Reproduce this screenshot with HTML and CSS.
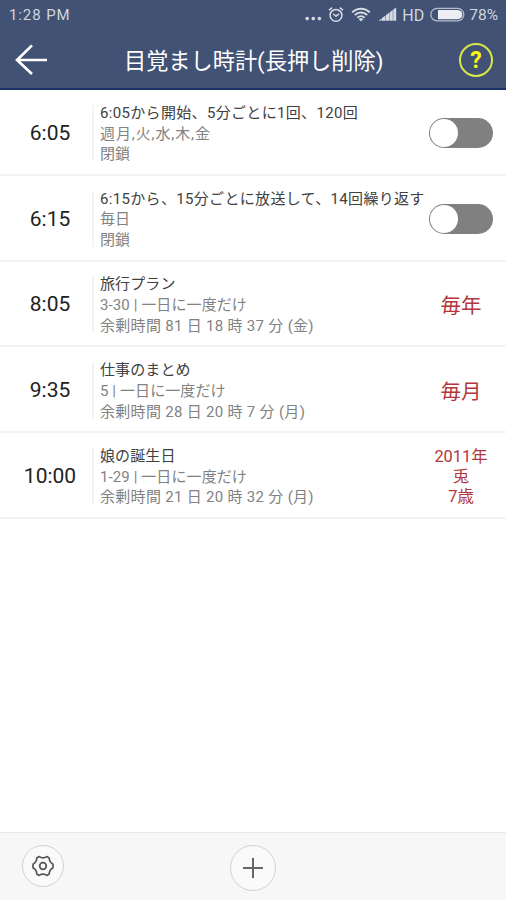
FILE: index.html
```html
<!DOCTYPE html>
<html lang="ja">
<head>
    <meta charset="UTF-8">
    <meta name="viewport" content="width=device-width, initial-scale=1.0">
    <title>目覚まし時計</title>
    <link rel="stylesheet" href="styles.css">
</head>
<body>

<div class="app">
    <header class="header">
        <div class="status-bar">
            <span class="clock">1:28 PM</span>
            <div class="status-icons">
                <svg class="dots" width="17" height="18" viewBox="0 0 17 18" fill="#d5dae3">
                    <circle cx="2.2" cy="12.6" r="1.8"/>
                    <circle cx="8.3" cy="12.6" r="1.8"/>
                    <circle cx="14.4" cy="12.6" r="1.8"/>
                </svg>
                <svg class="alarm" width="16" height="18" viewBox="0 0 16 18" fill="none" stroke="#d5dae3" stroke-width="1.5">
                    <circle cx="8" cy="9.3" r="5.9"/>
                    <path d="M1 4.2L4.2 1.7M15 4.2L11.8 1.7M5.2 7.8L8 10.2L11 7.8"/>
                </svg>
                <svg class="wifi" width="20" height="18" viewBox="0 0 20 18" fill="none" stroke="#d5dae3" stroke-width="2">
                    <path d="M1.2 6.4C6.3 1.4 13.7 1.4 18.8 6.4M3.8 9.1C7.5 5.6 12.5 5.6 16.2 9.1M6.4 11.7C8.5 9.7 11.5 9.7 13.6 11.7"/>
                    <path d="M10 15.6L7.6 12.9Q10 11.1 12.4 12.9Z" fill="#d5dae3" stroke="none"/>
                </svg>
                <svg class="signal" width="19" height="18" viewBox="0 0 19 18" fill="#d5dae3">
                    <path d="M0.5 14.8L3.6 12.4V14.8ZM4 12L7.6 9.4V14.8H4ZM8 9.1L11.4 6.5V14.8H8ZM11.8 6.2L14.8 3.9V14.8H11.8ZM15.2 3.5L18.2 1.4V14.8H15.2Z"/>
                </svg>
                <span class="hd">HD</span>
                <svg class="battery" width="35" height="18" viewBox="0 0 35 18">
                    <rect x="0.8" y="2.3" width="33" height="12.6" rx="6.3" fill="none" stroke="#b5bdcb" stroke-width="1.3"/>
                    <path d="M8 4H27.5Q32.3 4.3 32.3 8.6Q32.3 13 27.5 13.2H8Z" fill="#eceef1"/>
                </svg>
                <span class="percent">78%</span>
            </div>
        </div>
        <div class="title-bar">
            <svg class="back" width="34" height="34" viewBox="0 0 34 34" fill="none" stroke="#fff" stroke-width="2.7">
                <path d="M32 17H2M17 2.4L2 17L17 31"/>
            </svg>
            <h1>目覚まし時計(長押し削除)</h1>
            <div class="help">?</div>
        </div>
    </header>

    <main class="alarm-list">
        <div class="alarm-row">
            <div class="time">6:05</div>
            <div class="info">
                <p class="name long">6:05から開始、5分ごとに1回、120回</p>
                <p class="days">週月,火,水,木,金</p>
                <p>閉鎖</p>
            </div>
            <div class="action"><div class="switch"></div></div>
        </div>
        <div class="alarm-row">
            <div class="time">6:15</div>
            <div class="info">
                <p class="name long">6:15から、15分ごとに放送して、14回繰り返す</p>
                <p>毎日</p>
                <p>閉鎖</p>
            </div>
            <div class="action"><div class="switch"></div></div>
        </div>
        <div class="alarm-row">
            <div class="time">8:05</div>
            <div class="info">
                <p class="name">旅行プラン</p>
                <p>3-30 | 一日に一度だけ</p>
                <p class="remain">余剰時間 81 日 18 時 37 分 (金)</p>
            </div>
            <div class="action repeat">毎年</div>
        </div>
        <div class="alarm-row">
            <div class="time">9:35</div>
            <div class="info">
                <p class="name">仕事のまとめ</p>
                <p>5 | 一日に一度だけ</p>
                <p class="remain">余剰時間 28 日 20 時 7 分 (月)</p>
            </div>
            <div class="action repeat">毎月</div>
        </div>
        <div class="alarm-row">
            <div class="time">10:00</div>
            <div class="info">
                <p class="name">娘の誕生日</p>
                <p>1-29 | 一日に一度だけ</p>
                <p class="remain">余剰時間 21 日 20 時 32 分 (月)</p>
            </div>
            <div class="action birthday">2011年<br>兎<br>7歳</div>
        </div>
    </main>

    <footer class="footer">
        <div class="round-btn settings">
            <svg width="24" height="24" viewBox="0 0 24 24" fill="none" stroke="#555" stroke-width="1.7" stroke-linejoin="round">
                <path d="M8.2 2.6Q12 5 15.8 2.6L18.2 4Q18.3 8.1 22 10.2V13.8Q18.3 15.9 18.2 20L15.8 21.4Q12 19 8.2 21.4L5.8 20Q5.7 15.9 2 13.8V10.2Q5.7 8.1 5.8 4Z"/>
                <circle cx="12" cy="12" r="3.3"/>
            </svg>
        </div>
        <div class="round-btn add">
            <svg width="22" height="22" viewBox="0 0 22 22" stroke="#666" stroke-width="2">
                <path d="M11 1V21M1 11H21"/>
            </svg>
        </div>
    </footer>
</div>

</body>
</html>
```
FILE: styles.css
```css
* {
    box-sizing: border-box;
}
body {
    font-family: Roboto, "Noto Sans CJK JP", sans-serif;
    background-color: #fff;
    margin: 0;
}
.app {
    display: flex;
    flex-direction: column;
    height: 900px;
}
.header {
    height: 90px;
    background-color: #415274;
    border-bottom: 2px solid #1c3268;
    color: #fff;
}
.status-bar {
    display: flex;
    justify-content: space-between;
    align-items: center;
    height: 30px;
    padding: 0 8px 0 9px;
    color: #d0d5df;
    font-size: 15px;
}
.clock {
    letter-spacing: 0.9px;
}
.status-icons {
    display: flex;
    align-items: center;
}
.alarm {
    margin-left: 6px;
}
.wifi {
    margin-left: 7px;
}
.signal {
    margin-left: 7px;
}
.hd {
    margin-left: 5px;
    font-size: 16px;
}
.battery {
    margin-left: 6px;
}
.percent {
    margin-left: 4px;
    font-size: 15.5px;
}
.title-bar {
    display: flex;
    align-items: center;
    height: 60px;
    padding: 0 13px 0 15px;
}
h1 {
    margin: 2px 0 0 75px;
    font-size: 22.2px;
    font-weight: 400;
    line-height: 30px;
    white-space: nowrap;
}
.help {
    width: 34px;
    height: 34px;
    margin-left: auto;
    border: 2px solid #dbe64a;
    border-radius: 50%;
    color: #f7fa12;
    font-size: 23px;
    font-weight: 700;
    line-height: 31px;
    text-align: center;
}
.alarm-list {
    flex: 1;
}
.alarm-row {
    display: flex;
    align-items: center;
    height: 85.8px;
    padding-top: 2px;
    border-bottom: 2px solid #f3f3f3;
}
.time {
    width: 92px;
    padding-left: 8px;
    color: #222;
    font-size: 21px;
    text-align: center;
}
.info {
    width: 336px;
    height: 56px;
    padding-left: 6px;
    border-left: 2px solid #f3f3f3;
    color: #828282;
    font-size: 15px;
    white-space: nowrap;
}
.info p {
    margin: 0;
    line-height: 20.7px;
    letter-spacing: 0.1px;
}
.info .name {
    margin-top: -2px;
    color: #404040;
}
.info .long {
    letter-spacing: 0.33px;
}
.info .days {
    letter-spacing: 0.9px;
}
.info .remain {
    letter-spacing: 0.3px;
}
.action {
    width: 66px;
    color: #b3363b;
    text-align: center;
}
.switch {
    display: flex;
    align-items: center;
    width: 64px;
    height: 30px;
    margin-left: 1px;
    padding-left: 1px;
    background-color: #808080;
    border-radius: 15px;
}
.switch::before {
    content: "";
    width: 28px;
    height: 28px;
    border-radius: 50%;
    background-color: #fff;
}
.repeat {
    font-size: 20.5px;
}
.birthday {
    padding-top: 2px;
    font-size: 16.4px;
    line-height: 20px;
}
.footer {
    display: grid;
    grid-template-columns: 1fr auto 1fr;
    align-items: start;
    height: 68px;
    padding: 12px 22px;
    background-color: #f7f7f7;
    border-top: 1px solid #e8e8e8;
}
.round-btn {
    display: flex;
    align-items: center;
    justify-content: center;
    border: 1px solid #d2d2d2;
    border-radius: 50%;
    background-color: #fafafa;
}
.settings {
    width: 42px;
    height: 42px;
}
.add {
    width: 46px;
    height: 46px;
}
```
